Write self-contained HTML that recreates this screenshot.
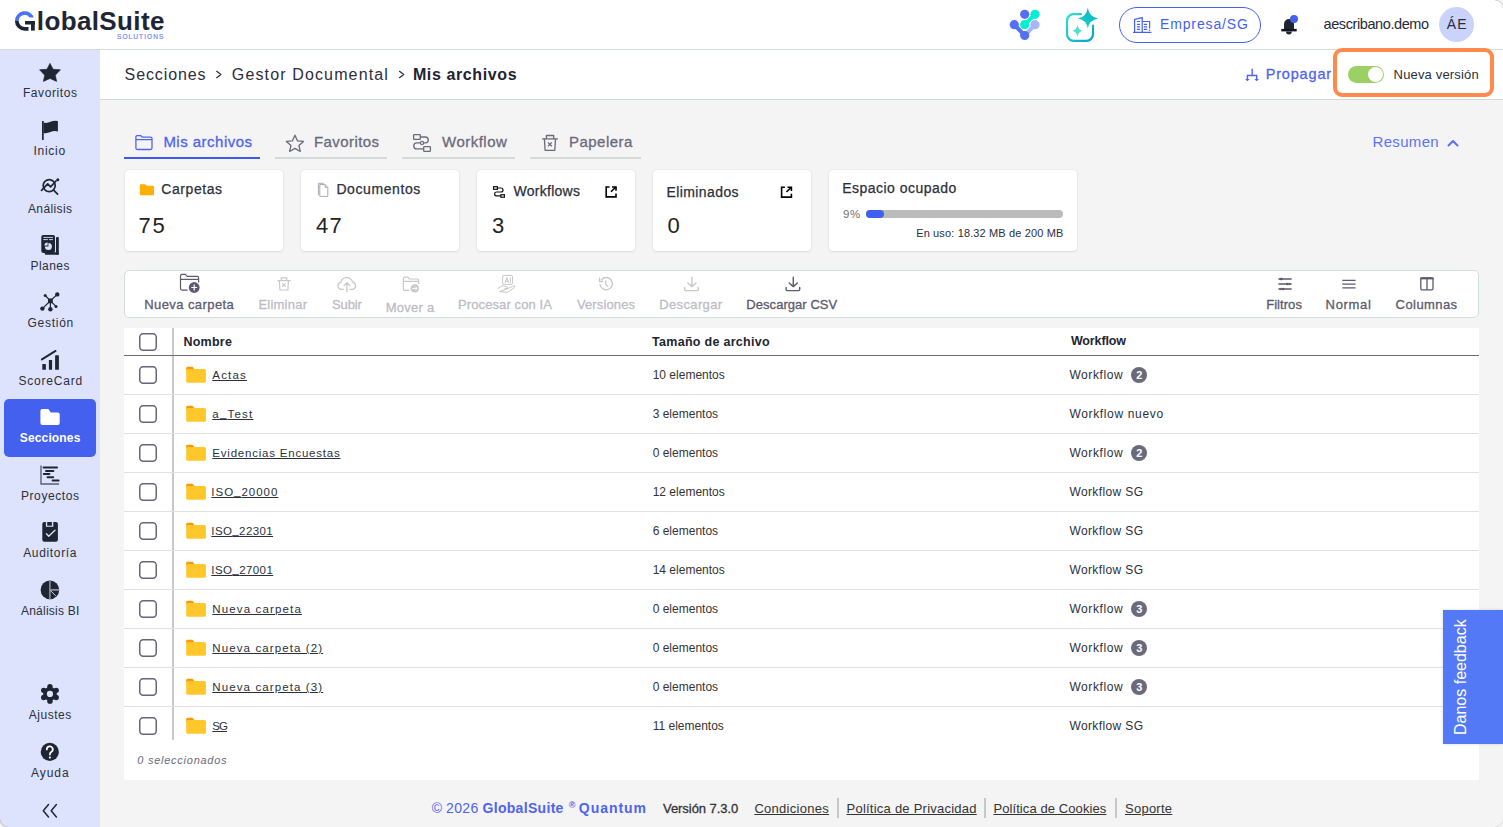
<!DOCTYPE html>
<html><head><meta charset="utf-8">
<style>
html,body{margin:0;padding:0;}
body{width:1503px;height:827px;position:relative;overflow:hidden;background:#f4f4f4;font-family:"Liberation Sans", sans-serif;}
.t{position:absolute;white-space:nowrap;line-height:1;}
.a{position:absolute;}
.g{background:linear-gradient(to bottom,#4a7cf7 0,#4a7cf7 47%,#1e2635 47%);-webkit-background-clip:text;background-clip:text;color:transparent;}
svg{position:absolute;overflow:visible;}
</style></head><body>
<!-- header -->
<div class="a" style="left:0;top:0;width:1503px;height:49px;background:#fff;"></div>
<div class="a" style="left:0;top:49px;width:1503px;height:1px;background:#d5dddb;"></div>
<!-- sidebar -->
<div class="a" style="left:0;top:50px;width:100px;height:777px;background:#dde3fd;"></div>
<div class="a" style="left:4px;top:399px;width:92px;height:58px;background:#4361ee;border-radius:5px;"></div>
<!-- breadcrumb bar -->
<div class="a" style="left:100px;top:50px;width:1403px;height:49px;background:#fff;"></div>
<div class="a" style="left:100px;top:99px;width:1403px;height:1px;background:#d3dbd9;"></div>
<!-- orange box -->
<div class="a" style="left:1333px;top:48px;width:153px;height:41px;border:4px solid #ff8a4c;border-radius:9px;"></div>
<!-- toggle -->
<div class="a" style="left:1348px;top:66px;width:36px;height:17px;background:#9bd164;border-radius:9px;"></div>
<div class="a" style="left:1368px;top:67px;width:15px;height:15px;background:#fff;border-radius:50%;"></div>
<!-- pill -->
<div class="a" style="left:1119px;top:7px;width:140px;height:34px;border:1px solid #4361ee;border-radius:18px;"></div>
<!-- avatar -->
<div class="a" style="left:1439px;top:7px;width:35px;height:35px;background:#c9d3fb;border-radius:50%;"></div>
<!-- tab underlines -->
<div class="a" style="left:124px;top:157px;width:136px;height:2px;background:#3b5bf0;"></div>
<div class="a" style="left:275px;top:157px;width:112px;height:2px;background:#d3dbd9;"></div>
<div class="a" style="left:402px;top:157px;width:113px;height:2px;background:#d3dbd9;"></div>
<div class="a" style="left:530px;top:157px;width:111px;height:2px;background:#d3dbd9;"></div>
<!-- cards -->
<div class="a" style="left:125px;top:170px;width:158px;height:81px;background:#fff;border-radius:4px;box-shadow:0 1px 2px rgba(50,55,90,0.10),0 0 1.5px rgba(50,55,90,0.14);"></div>
<div class="a" style="left:301px;top:170px;width:158px;height:81px;background:#fff;border-radius:4px;box-shadow:0 1px 2px rgba(50,55,90,0.10),0 0 1.5px rgba(50,55,90,0.14);"></div>
<div class="a" style="left:477px;top:170px;width:158px;height:81px;background:#fff;border-radius:4px;box-shadow:0 1px 2px rgba(50,55,90,0.10),0 0 1.5px rgba(50,55,90,0.14);"></div>
<div class="a" style="left:653px;top:170px;width:158px;height:81px;background:#fff;border-radius:4px;box-shadow:0 1px 2px rgba(50,55,90,0.10),0 0 1.5px rgba(50,55,90,0.14);"></div>
<div class="a" style="left:829px;top:170px;width:248px;height:81px;background:#fff;border-radius:4px;box-shadow:0 1px 2px rgba(50,55,90,0.10),0 0 1.5px rgba(50,55,90,0.14);"></div>
<!-- progress -->
<div class="a" style="left:866px;top:210px;width:197px;height:8px;background:#bbbbbb;border-radius:4px;"></div>
<div class="a" style="left:866px;top:210px;width:18px;height:8px;background:#4060ef;border-radius:4px;"></div>
<!-- toolbar -->
<div class="a" style="left:124px;top:270px;width:1353px;height:46px;background:#fff;border:1px solid #d5dedb;border-radius:5px;"></div>
<!-- table -->
<div class="a" style="left:124px;top:328px;width:1355px;height:452px;background:#fff;"></div>
<div class="a" style="left:172px;top:328px;width:2px;height:412px;background:#c9c9c9;"></div>
<div class="a" style="left:124px;top:355px;width:1355px;height:1px;background:#6b6a7b;"></div>
<div class="a" style="left:124px;top:394px;width:1355px;height:1px;background:#e0e0e0;"></div>
<div class="a" style="left:124px;top:433px;width:1355px;height:1px;background:#e0e0e0;"></div>
<div class="a" style="left:124px;top:472px;width:1355px;height:1px;background:#e0e0e0;"></div>
<div class="a" style="left:124px;top:511px;width:1355px;height:1px;background:#e0e0e0;"></div>
<div class="a" style="left:124px;top:550px;width:1355px;height:1px;background:#e0e0e0;"></div>
<div class="a" style="left:124px;top:589px;width:1355px;height:1px;background:#e0e0e0;"></div>
<div class="a" style="left:124px;top:628px;width:1355px;height:1px;background:#e0e0e0;"></div>
<div class="a" style="left:124px;top:667px;width:1355px;height:1px;background:#e0e0e0;"></div>
<div class="a" style="left:124px;top:706px;width:1355px;height:1px;background:#e0e0e0;"></div>
<!-- footer separators -->
<div class="a" style="left:837px;top:798px;width:2px;height:20px;background:#c8c8c8;"></div>
<div class="a" style="left:984px;top:798px;width:2px;height:20px;background:#c8c8c8;"></div>
<div class="a" style="left:1115px;top:798px;width:2px;height:20px;background:#c8c8c8;"></div>
<!-- feedback -->
<div class="a" style="left:1443px;top:610px;width:60px;height:134px;background:#5479f7;box-shadow:0 0 3px rgba(0,0,0,0.15);"></div>
<svg style="left:0;top:0" width="1503" height="827" viewBox="0 0 1503 827"><path d="M14.95 20.9 A9.75 9.75 0 0 1 33.84 17.5 H29.64 A6 6 0 0 0 18.7 20.9 Z" fill="#4a72f5"/>
<path d="M14.95 20.9 A9.75 9.75 0 0 0 24.7 30.65 H28.5 V26.9 H24.7 A6 6 0 0 1 18.7 20.9 Z" fill="#1e2635"/><rect x="25" y="21" width="9.8" height="3.5" fill="#1e2635"/><rect x="31" y="21" width="3.8" height="9.6" fill="#1e2635"/>
<g stroke-linecap="round">
<line x1="1035" y1="24.7" x2="1024.7" y2="35.5" stroke="#a7b5fb" stroke-width="4"/>
<circle cx="1035" cy="24.7" r="4.6" fill="#a7b5fb"/>
<line x1="1014.3" y1="24.7" x2="1024.7" y2="35.5" stroke="#5470f6" stroke-width="4"/>
<circle cx="1014.3" cy="24.7" r="4.6" fill="#5470f6"/><circle cx="1024.7" cy="35.5" r="4.6" fill="#5470f6"/><circle cx="1024.7" cy="14.3" r="4.6" fill="#5470f6"/>
<line x1="1035" y1="14.3" x2="1024.7" y2="24.7" stroke="#00f0d2" stroke-width="4"/>
<circle cx="1035" cy="14.3" r="4.6" fill="#00f0d2"/><circle cx="1024.7" cy="24.7" r="4.6" fill="#00f0d2"/>
</g>
<defs><linearGradient id="gai" x1="0" y1="0" x2="1" y2="1"><stop offset="0" stop-color="#2fe3c8"/><stop offset="1" stop-color="#0b9fd0"/></linearGradient><linearGradient id="gst" x1="0" y1="1" x2="1" y2="0"><stop offset="0" stop-color="#14d8c4"/><stop offset="1" stop-color="#0aaccb"/></linearGradient></defs>
<path d="M1081 14.2 H1073.5 A6.5 6.5 0 0 0 1067 20.7 V34.3 A6.5 6.5 0 0 0 1073.5 40.8 H1086.5 A6.5 6.5 0 0 0 1093 34.3 V25.5" fill="none" stroke="url(#gai)" stroke-width="2.2" stroke-linecap="round"/>
<path d="M1087.8 7.8 Q1089.2 17.2 1098.2 18.6 Q1089.2 20 1087.8 28.5 Q1086.4 20 1077.9 18.6 Q1086.4 17.2 1087.8 7.8Z" fill="url(#gst)"/>
<path d="M1077.4 25 Q1078.2 29.9 1082.6 30.8 Q1078.2 31.7 1077.4 36.8 Q1076.6 31.7 1072.2 30.8 Q1076.6 29.9 1077.4 25Z" fill="#4fe0cf"/>
<g fill="none" stroke="#4361ee" stroke-width="1.2" stroke-linecap="round"><path d="M1133.5 32.3 H1151"/><path d="M1134.6 32 V19.4 L1142.2 17.6 V32"/><path d="M1142.2 21.5 H1149.6 V28"/><path d="M1137.4 21.5 H1139.6 M1137.4 24.3 H1139.6 M1137.4 26.9 H1139.6 M1137.4 29.4 H1139.6 M1144.3 24.3 H1146.7 M1144.3 26.9 H1146.7 M1144.3 29.4 H1146.7"/></g><circle cx="1149.6" cy="30.3" r="0.7" fill="#4361ee"/>
<path d="M1284 29 V24 A5 5 0 0 1 1294 24 V29 Z" fill="#1f2633"/><rect x="1281.3" y="28.9" width="15.4" height="2.5" fill="#0f1521"/><path d="M1286 31.6 A2.9 2.9 0 0 0 1291.8 31.6 Z" fill="#1f2633"/><circle cx="1294" cy="18.9" r="4" fill="#4361ee"/>
<g fill="none" stroke="#4f63f0" stroke-width="1.4"><path d="M1252.2 68.8 V75.5 M1247.4 79 V75.5 H1256.7 V79"/></g><path d="M1245.1 79 H1249.7 L1247.4 81.2Z M1254.4 79 H1259 L1256.7 81.2Z" fill="#4f63f0"/>
<g fill="none" stroke="#2d2d3a" stroke-width="1.25" stroke-linecap="round" stroke-linejoin="round"><path d="M216.7 71.3 L220.9 74.5 L216.7 77.7"/><path d="M399.5 71.3 L403.7 74.5 L399.5 77.7"/></g>
<g fill="none" stroke="#4f63f0" stroke-width="1.3" stroke-linejoin="round"><path d="M136.8 135.6 H140.5 L142.2 137.1 H150.5 A1.5 1.5 0 0 1 152 138.6 V148 A1.5 1.5 0 0 1 150.5 149.5 H137.4 A1.5 1.5 0 0 1 135.9 148 V136.8 A1.2 1.2 0 0 1 136.8 135.6Z M135.9 139.6 H152"/></g>
<path d="M294.95,135.20 L297.42,140.80 L303.51,141.42 L298.94,145.50 L300.24,151.48 L294.95,148.40 L289.66,151.48 L290.96,145.50 L286.39,141.42 L292.48,140.80Z" fill="none" stroke="#6b6a7b" stroke-width="1.3" stroke-linejoin="round"/>
<g fill="none" stroke="#6b6a7b" stroke-width="1.3"><rect x="413.6" y="134.6" width="6.7" height="4.8" rx="0.6"/><rect x="423.7" y="146.6" width="6.7" height="4.8" rx="0.6"/><path d="M420.3 137 H425.3 A2.95 2.95 0 0 1 425.3 142.9 H416.8 A3 3 0 0 0 416.8 148.9 H423.7"/></g><circle cx="422" cy="142.9" r="1.6" fill="#f4f4f4" stroke="#6b6a7b" stroke-width="1.2"/>
<g fill="none" stroke="#6b6a7b" stroke-width="1.3" stroke-linejoin="round"><path d="M542.1 138.9 H557.9"/><path d="M546.4 138.9 V135.5 H553.7 V138.9"/><path d="M544.4 138.9 L545.1 150.3 H554.8 L555.5 138.9"/><path d="M548 142.4 L551.8 146.2 M551.8 142.4 L548 146.2"/></g>
<path d="M1448.5 145.5 L1453 141 L1457.5 145.5" fill="none" stroke="#5a73f5" stroke-width="2" stroke-linecap="round" stroke-linejoin="round"/>
<path d="M139.8 185.4 A1.2 1.2 0 0 1 141 184.2 H145.2 L146.8 185.8 H152.8 A1.2 1.2 0 0 1 154 187 V194.1 A1.2 1.2 0 0 1 152.8 195.3 H141 A1.2 1.2 0 0 1 139.8 194.1Z" fill="#ffb000"/>
<g fill="none" stroke="#a9a9b4" stroke-width="1" stroke-linejoin="round"><path d="M319.8 184.6 H325.2 L327.8 187.4 V196.4 H319.8Z"/><path d="M318.4 195.2 V183.3 H323.8"/><path d="M325.2 184.8 V187.4 H327.6"/></g>
<g fill="none" stroke="#111" stroke-width="1.2"><rect x="493.6" y="186.7" width="3.8" height="2.6"/><rect x="500.9" y="194.7" width="3.5" height="2.5"/><path d="M497.4 188 H501 A2 2 0 0 1 501 192 H496.6 A1.9 1.9 0 0 0 496.6 195.9 H500.9"/></g>
<g fill="none" stroke="#000" stroke-width="1.6" stroke-linejoin="miter"><path d="M609.5 187.0 H606.2 V196.9 H616.0 V193.5"/><path d="M611.0 191.8 L615.8 187.0"/><path d="M612.0 187.0 H616.0 V190.8"/></g>
<g fill="none" stroke="#000" stroke-width="1.6" stroke-linejoin="miter"><path d="M784.9 187.2 H781.6 V197.1 H791.4 V193.7"/><path d="M786.4 192.0 L791.2 187.2"/><path d="M787.4 187.2 H791.4 V191.0"/></g>
<g fill="none" stroke="#5c5a6e" stroke-width="1.2" stroke-linejoin="round"><path d="M187.6 290.1 H182 A1.5 1.5 0 0 1 180.5 288.6 V275.8 A1.4 1.4 0 0 1 181.9 274.4 H185.4 L187.3 276.4 H197.2 A1.4 1.4 0 0 1 198.6 277.8 V282.6"/><path d="M180.5 279.4 H198.6"/></g><circle cx="194.2" cy="287.5" r="5.4" fill="#5c5a6e"/><path d="M194.2 284.6 V290.4 M191.3 287.5 H197.1" stroke="#fff" stroke-width="1.2"/>
<g fill="none" stroke="#c8c8cc" stroke-width="1.2" stroke-linejoin="round"><path d="M277.4 280.6 H290.6"/><path d="M281.3 280.6 V277.9 H286.8 V280.6"/><path d="M279.4 280.6 L279.9 290 H287.9 L288.4 280.6"/><path d="M282.2 283.4 L285.6 286.8 M285.6 283.4 L282.2 286.8"/></g>
<g fill="none" stroke="#c8c8cc" stroke-width="1.3" stroke-linecap="round" stroke-linejoin="round"><path d="M343.7 289.4 H341.3 A3.6 3.6 0 0 1 340.8 282.3 A6 6 0 0 1 352.4 281.8 A3.9 3.9 0 0 1 352.6 289.4 H350.1"/><path d="M346.9 291.5 V282.8 M344 285.6 L346.9 282.6 L349.8 285.6"/></g>
<g fill="none" stroke="#c8c8cc" stroke-width="1.2" stroke-linejoin="round"><path d="M409.5 290.4 H404.8 A1.4 1.4 0 0 1 403.4 289 V278.6 A1.4 1.4 0 0 1 404.8 277.2 H407.9 L409.2 279 H417.2 A1.4 1.4 0 0 1 418.6 280.4 V284"/><path d="M403.4 281.4 H418.6"/></g><circle cx="414.8" cy="288.4" r="4.2" fill="#c8c8cc"/><path d="M412.3 288.4 H417 M415.3 286.6 L417.1 288.4 L415.3 290.2" fill="none" stroke="#fff" stroke-width="1"/>
<g fill="none" stroke="#c8c8cc" stroke-width="1" stroke-linejoin="round"><rect x="502.6" y="275.4" width="9.9" height="9" rx="1.5"/><path d="M505 282.8 L506.8 277.6 L508.6 282.8 M505.6 281.2 H508 M510.4 277.6 V282.8"/><path d="M497.6 288.8 L501 286.4 Q502.6 285.4 504.5 286.2 L507.6 287.3 Q508.6 287.8 507.8 288.6 L504.5 288.6 M507.8 288.6 L513.5 285.8 Q515.2 285.4 514.8 286.9 L509 291.6 Q507.8 292.4 506.2 292.3 L499.5 291.6 Z"/></g>
<g fill="none" stroke="#c8c8cc" stroke-width="1.3" stroke-linecap="round" stroke-linejoin="round"><path d="M600 284.5 A6.2 6.2 0 1 0 601.5 279.6"/><path d="M599.6 278.2 V281.5 H602.9"/><path d="M605.8 281 V284.6 L607.8 286.2"/></g>
<g fill="none" stroke="#c8c8cc" stroke-width="1.4" stroke-linecap="round" stroke-linejoin="round"><path d="M691.9 277.2 V286.2 M687.8 283 L691.9 286.6 L696.0 283"/><path d="M684.7 287.4 V289.6 A1 1 0 0 0 685.7 290.6 H697.3 A1 1 0 0 0 698.3 289.6 V287.4"/></g>
<g fill="none" stroke="#5c5a6e" stroke-width="1.4" stroke-linecap="round" stroke-linejoin="round"><path d="M793.3 277.2 V286.2 M789.2 283 L793.3 286.6 L797.4 283"/><path d="M786.1 287.4 V289.6 A1 1 0 0 0 787.1 290.6 H798.7 A1 1 0 0 0 799.7 289.6 V287.4"/></g>
<g fill="none" stroke="#5c5a6e" stroke-width="1.3"><path d="M1278.4 279 H1291.6 M1278.4 284 H1291.6 M1278.4 289 H1291.6"/></g><g fill="#5c5a6e"><path d="M1279 279 L1281.3 277.4 V280.6Z"/><path d="M1291 284 L1288.7 282.4 V285.6Z"/><path d="M1279 289 L1281.3 287.4 V290.6Z"/><circle cx="1283.2" cy="289" r="1.2"/><circle cx="1287.2" cy="284" r="1.2"/><circle cx="1281.6" cy="279" r="1.2"/></g>
<path d="M1342.3 280.4 H1355.6 M1342.3 284.1 H1355.6 M1342.3 287.8 H1355.6" stroke="#5c5a6e" stroke-width="1.2"/>
<g fill="none" stroke="#5c5a6e" stroke-width="1.3"><rect x="1420.8" y="278" width="12.2" height="11.8" rx="1.3"/><path d="M1427 278 V289.8"/></g><rect x="1420.2" y="277.4" width="13.4" height="2" fill="#5c5a6e"/>
<path d="M186.2 370.5 V368.1 Q186.2 366.7 187.6 366.7 H192.5 L195.1 369.7 V370.5 Z" fill="#ff9800"/>
<rect x="186.2" y="368.9" width="19.7" height="13.9" rx="1.6" fill="#ffc729"/>
<circle cx="1139" cy="375" r="8" fill="#6b6a7b"/>
<path d="M186.2 409.5 V407.1 Q186.2 405.7 187.6 405.7 H192.5 L195.1 408.7 V409.5 Z" fill="#ff9800"/>
<rect x="186.2" y="407.9" width="19.7" height="13.9" rx="1.6" fill="#ffc729"/>
<path d="M186.2 448.5 V446.1 Q186.2 444.7 187.6 444.7 H192.5 L195.1 447.7 V448.5 Z" fill="#ff9800"/>
<rect x="186.2" y="446.9" width="19.7" height="13.9" rx="1.6" fill="#ffc729"/>
<circle cx="1139" cy="453" r="8" fill="#6b6a7b"/>
<path d="M186.2 487.5 V485.1 Q186.2 483.7 187.6 483.7 H192.5 L195.1 486.7 V487.5 Z" fill="#ff9800"/>
<rect x="186.2" y="485.9" width="19.7" height="13.9" rx="1.6" fill="#ffc729"/>
<path d="M186.2 526.5 V524.1 Q186.2 522.7 187.6 522.7 H192.5 L195.1 525.7 V526.5 Z" fill="#ff9800"/>
<rect x="186.2" y="524.9" width="19.7" height="13.9" rx="1.6" fill="#ffc729"/>
<path d="M186.2 565.5 V563.1 Q186.2 561.7 187.6 561.7 H192.5 L195.1 564.7 V565.5 Z" fill="#ff9800"/>
<rect x="186.2" y="563.9" width="19.7" height="13.9" rx="1.6" fill="#ffc729"/>
<path d="M186.2 604.5 V602.1 Q186.2 600.7 187.6 600.7 H192.5 L195.1 603.7 V604.5 Z" fill="#ff9800"/>
<rect x="186.2" y="602.9" width="19.7" height="13.9" rx="1.6" fill="#ffc729"/>
<circle cx="1139" cy="609" r="8" fill="#6b6a7b"/>
<path d="M186.2 643.5 V641.1 Q186.2 639.7 187.6 639.7 H192.5 L195.1 642.7 V643.5 Z" fill="#ff9800"/>
<rect x="186.2" y="641.9" width="19.7" height="13.9" rx="1.6" fill="#ffc729"/>
<circle cx="1139" cy="648" r="8" fill="#6b6a7b"/>
<path d="M186.2 682.5 V680.1 Q186.2 678.7 187.6 678.7 H192.5 L195.1 681.7 V682.5 Z" fill="#ff9800"/>
<rect x="186.2" y="680.9" width="19.7" height="13.9" rx="1.6" fill="#ffc729"/>
<circle cx="1139" cy="687" r="8" fill="#6b6a7b"/>
<path d="M186.2 721.5 V719.1 Q186.2 717.7 187.6 717.7 H192.5 L195.1 720.7 V721.5 Z" fill="#ff9800"/>
<rect x="186.2" y="719.9" width="19.7" height="13.9" rx="1.6" fill="#ffc729"/>
<rect x="139.75" y="333.75" width="16.5" height="16.5" rx="3.5" fill="none" stroke="#66657a" stroke-width="1.5"/>
<rect x="139.75" y="366.75" width="16.5" height="16.5" rx="3.5" fill="none" stroke="#66657a" stroke-width="1.5"/>
<rect x="139.75" y="405.75" width="16.5" height="16.5" rx="3.5" fill="none" stroke="#66657a" stroke-width="1.5"/>
<rect x="139.75" y="444.75" width="16.5" height="16.5" rx="3.5" fill="none" stroke="#66657a" stroke-width="1.5"/>
<rect x="139.75" y="483.75" width="16.5" height="16.5" rx="3.5" fill="none" stroke="#66657a" stroke-width="1.5"/>
<rect x="139.75" y="522.75" width="16.5" height="16.5" rx="3.5" fill="none" stroke="#66657a" stroke-width="1.5"/>
<rect x="139.75" y="561.75" width="16.5" height="16.5" rx="3.5" fill="none" stroke="#66657a" stroke-width="1.5"/>
<rect x="139.75" y="600.75" width="16.5" height="16.5" rx="3.5" fill="none" stroke="#66657a" stroke-width="1.5"/>
<rect x="139.75" y="639.75" width="16.5" height="16.5" rx="3.5" fill="none" stroke="#66657a" stroke-width="1.5"/>
<rect x="139.75" y="678.75" width="16.5" height="16.5" rx="3.5" fill="none" stroke="#66657a" stroke-width="1.5"/>
<rect x="139.75" y="717.75" width="16.5" height="16.5" rx="3.5" fill="none" stroke="#66657a" stroke-width="1.5"/>
<path d="M50 63.4 L53.1 69.3 L60.4 69.8 L55.3 75.2 L56.6 81.4 L50 78.4 L43.4 81.4 L44.7 75.2 L39.6 69.8 L46.9 69.3Z" fill="#1f2633" stroke="#1f2633" stroke-width="0.7" stroke-linejoin="round"/>
<rect x="42" y="121" width="1.7" height="19" fill="#1f2633"/><path d="M43.5 122.6 Q47 123.6 50.5 121.8 Q54.3 120 57.9 121.1 V131.6 Q54.3 130.4 50.5 132.1 Q47 133.6 43.5 133 Z" fill="#1f2633"/>
<g fill="none" stroke="#1f2633" stroke-width="1.7" stroke-linecap="round" stroke-linejoin="round"><circle cx="49.2" cy="185.6" r="6"/><path d="M53.6 190.2 L57.6 194.2"/><path d="M41.5 190.4 L47.7 183.9 L50.6 186.9 L56 181"/></g><circle cx="57.8" cy="179.7" r="1.5" fill="#1f2633"/>
<rect x="56" y="237" width="2.8" height="17.8" rx="0.8" fill="#1f2633"/><rect x="44.8" y="252.2" width="14" height="2.6" rx="0.8" fill="#1f2633"/><rect x="41.3" y="235.1" width="13.7" height="17.8" rx="1.8" fill="#1f2633"/><path d="M43.3 237.4 H53 M43.3 239.6 H47.8 M49 239.6 H53" stroke="#dde3fd" stroke-width="0.9"/><path d="M48.4 246.4 V242.9 A3.5 3.5 0 1 1 44.9 246.4 Z" fill="#dde3fd"/><path d="M47.6 245.6 H44.4 A3.2 3.2 0 0 1 47.6 242.4Z" fill="#dde3fd"/>
<g stroke="#1f2633" stroke-width="1.2"><path d="M50.4 300.8 L45.2 295.5 M50.4 300.8 L57.3 294.4 M50.4 300.8 L42.4 308.6 M50.4 300.8 V309.3 M50.4 300.8 L56 306.4"/></g><g fill="#1f2633"><rect x="48" y="298.4" width="4.8" height="4.8" rx="0.6"/><circle cx="45.2" cy="295.5" r="1.5"/><circle cx="57.3" cy="294.4" r="2.2"/><circle cx="42.4" cy="308.6" r="2.2"/><circle cx="50.4" cy="309.3" r="2.2"/><circle cx="56" cy="306.4" r="1.5"/></g>
<g fill="#1f2633"><rect x="42.3" y="364" width="3.6" height="5.8" rx="0.5"/><rect x="48.9" y="360" width="3.2" height="9.8" rx="0.5"/><rect x="55.1" y="355.2" width="3.8" height="14.6" rx="0.5"/></g><path d="M41.9 359.4 L55.6 350.9" stroke="#1f2633" stroke-width="1.9" stroke-linecap="round"/>
<path d="M40.4 410.8 A1.9 1.9 0 0 1 42.3 408.9 H48.3 L50.8 412.4 H57.8 A1.9 1.9 0 0 1 59.7 414.3 V423 A1.9 1.9 0 0 1 57.8 424.9 H42.3 A1.9 1.9 0 0 1 40.4 423Z" fill="#fff"/>
<path d="M41 465.6 V484 H59" fill="none" stroke="#5a6070" stroke-width="1.4"/><g stroke="#1f2633" stroke-width="2" stroke-linecap="round"><path d="M43.6 467.4 H57 M46 470.9 H53.4 M43.8 474 H49.4 M47.6 477.2 H53.2 M52.6 480.5 H58.6"/></g>
<path d="M42.3 524 A2 2 0 0 1 44.3 522 H45.9 V526.8 H53.3 V522 H55.9 A2 2 0 0 1 57.9 524 V539.7 A2 2 0 0 1 55.9 541.7 H44.3 A2 2 0 0 1 42.3 539.7Z" fill="#1f2633"/><rect x="47.2" y="522" width="4.7" height="3.7" fill="#1f2633"/><path d="M46.4 533.8 L48.7 536.3 L55 530.2" fill="none" stroke="#dde3fd" stroke-width="1.3" stroke-linecap="round" stroke-linejoin="round"/>
<circle cx="49.9" cy="589.9" r="9.3" fill="#1f2633"/><path d="M49.9 580.6 V599.2 M49.9 589.9 H59.2" stroke="#8a90a0" stroke-width="1.6"/><path d="M50.4 590.4 L55.8 595.9" stroke="#c9cfe6" stroke-width="1"/>
<g fill="#1f2633"><circle cx="49.95" cy="686.75" r="2.7"/><circle cx="56.19" cy="690.35" r="2.7"/><circle cx="56.19" cy="697.55" r="2.7"/><circle cx="49.95" cy="701.15" r="2.7"/><circle cx="43.71" cy="697.55" r="2.7"/><circle cx="43.71" cy="690.35" r="2.7"/><circle cx="49.95" cy="693.95" r="6.9"/></g><circle cx="49.95" cy="693.95" r="3.1" fill="#dde3fd"/>
<circle cx="49.8" cy="751.9" r="9.1" fill="#1f2633"/><path d="M46.8 749.4 A3 3 0 1 1 51.2 752 Q49.9 752.8 49.9 754.6" fill="none" stroke="#fff" stroke-width="1.7" stroke-linecap="round"/><circle cx="49.9" cy="757.5" r="1.1" fill="#fff"/>
<path d="M48.5 804.5 L43.3 810.7 L48.5 816.9 M56.4 804.5 L51.2 810.7 L56.4 816.9" fill="none" stroke="#1f2633" stroke-width="1.5" stroke-linecap="round" stroke-linejoin="round"/>
<path d="M1503 0 H1495 A8 8 0 0 1 1503 8 Z" fill="#f4f4f4"/><path d="M1495 0 A8 8 0 0 1 1503 8" fill="none" stroke="#d0d0d0" stroke-width="1"/>
<path d="M0 827 V819 A8 8 0 0 0 8 827 Z" fill="#f4f4f4"/><path d="M0 819 A8 8 0 0 0 8 827" fill="none" stroke="#cccccc" stroke-width="1.2"/>
<path d="M1503 827 V819 A8 8 0 0 1 1495 827 Z" fill="#f4f4f4"/><path d="M1503 819 A8 8 0 0 1 1495 827" fill="none" stroke="#dddddd" stroke-width="1"/></svg>
<div class="t" style="left:36.80px;top:6px;line-height:30px;font-size:26px;color:#1e2635;font-weight:700;letter-spacing:0.380px;">lobalSuite</div>
<div class="t" style="left:117.00px;top:33px;line-height:7px;font-size:6.6px;color:#6f8ef6;letter-spacing:1.037px;-webkit-text-stroke:0.2px currentColor;">SOLUTIONS</div>
<div class="t" style="left:1160.00px;top:16px;line-height:16px;font-size:14px;color:#4361ee;letter-spacing:0.861px;">Empresa/SG</div>
<div class="t" style="left:1323.50px;top:16px;line-height:16px;font-size:14.5px;color:#1f2937;letter-spacing:-0.405px;">aescribano.demo</div>
<div class="t" style="left:1446.80px;top:16px;line-height:16px;font-size:14px;color:#2b2b3b;letter-spacing:1.062px;">ÁE</div>
<div class="t" style="left:124.60px;top:66px;line-height:17px;font-size:16px;color:#2d2d3a;letter-spacing:0.885px;">Secciones</div>
<div class="t" style="left:231.80px;top:66px;line-height:17px;font-size:16px;color:#2d2d3a;letter-spacing:1.139px;">Gestor Documental</div>
<div class="t" style="left:412.90px;top:66px;line-height:17px;font-size:16px;color:#23232f;font-weight:700;letter-spacing:0.615px;">Mis archivos</div>
<div class="t" style="left:1265.70px;top:66px;line-height:16px;font-size:14.5px;color:#4f63f0;letter-spacing:0.826px;-webkit-text-stroke:0.3px currentColor;">Propagar</div>
<div class="t" style="left:1393.60px;top:67px;line-height:15px;font-size:13px;color:#2b2f3a;letter-spacing:0.161px;">Nueva versión</div>
<div class="t" style="left:163.40px;top:133px;line-height:17px;font-size:15px;color:#4f63f0;letter-spacing:0.477px;-webkit-text-stroke:0.3px currentColor;">Mis archivos</div>
<div class="t" style="left:314.00px;top:133px;line-height:17px;font-size:15px;color:#6b6a7b;letter-spacing:0.427px;-webkit-text-stroke:0.3px currentColor;">Favoritos</div>
<div class="t" style="left:442.00px;top:133px;line-height:17px;font-size:15px;color:#6b6a7b;letter-spacing:0.491px;-webkit-text-stroke:0.3px currentColor;">Workflow</div>
<div class="t" style="left:569.00px;top:133px;line-height:17px;font-size:15px;color:#6b6a7b;letter-spacing:0.471px;-webkit-text-stroke:0.3px currentColor;">Papelera</div>
<div class="t" style="left:1372.50px;top:133px;line-height:17px;font-size:15px;color:#5a73f5;letter-spacing:0.324px;">Resumen</div>
<div class="t" style="left:161.30px;top:181px;line-height:16px;font-size:14px;color:#2b2f3a;letter-spacing:0.570px;-webkit-text-stroke:0.25px currentColor;">Carpetas</div>
<div class="t" style="left:138.50px;top:213px;line-height:25px;font-size:22px;color:#222222;letter-spacing:1.765px;">75</div>
<div class="t" style="left:336.40px;top:181px;line-height:16px;font-size:14px;color:#2b2f3a;letter-spacing:0.590px;-webkit-text-stroke:0.25px currentColor;">Documentos</div>
<div class="t" style="left:315.90px;top:213px;line-height:25px;font-size:22px;color:#222222;letter-spacing:1.265px;">47</div>
<div class="t" style="left:513.60px;top:183px;line-height:16px;font-size:14px;color:#2b2f3a;letter-spacing:0.262px;-webkit-text-stroke:0.25px currentColor;">Workflows</div>
<div class="t" style="left:492.00px;top:213px;line-height:25px;font-size:22px;color:#222222;">3</div>
<div class="t" style="left:666.50px;top:184px;line-height:16px;font-size:14px;color:#2b2f3a;letter-spacing:0.403px;-webkit-text-stroke:0.25px currentColor;">Eliminados</div>
<div class="t" style="left:667.50px;top:213px;line-height:25px;font-size:22px;color:#222222;">0</div>
<div class="t" style="left:842.20px;top:180px;line-height:16px;font-size:14px;color:#2b2f3a;letter-spacing:0.477px;-webkit-text-stroke:0.25px currentColor;">Espacio ocupado</div>
<div class="t" style="left:843.00px;top:208px;line-height:12px;font-size:11.5px;color:#707070;letter-spacing:0.604px;">9%</div>
<div class="t" style="left:916.20px;top:227px;line-height:12px;font-size:11px;color:#2b2f3a;letter-spacing:0.138px;">En uso: 18.32 MB de 200 MB</div>
<div class="t" style="left:144.20px;top:297px;line-height:15px;font-size:13px;color:#5c5a6e;letter-spacing:0.423px;-webkit-text-stroke:0.3px currentColor;">Nueva carpeta</div>
<div class="t" style="left:258.40px;top:297px;line-height:15px;font-size:13px;color:#bdbcc6;letter-spacing:0.239px;-webkit-text-stroke:0.3px currentColor;">Eliminar</div>
<div class="t" style="left:331.90px;top:297px;line-height:15px;font-size:13px;color:#bdbcc6;letter-spacing:-0.080px;-webkit-text-stroke:0.3px currentColor;">Subir</div>
<div class="t" style="left:385.70px;top:300px;line-height:15px;font-size:13px;color:#bdbcc6;letter-spacing:0.262px;-webkit-text-stroke:0.3px currentColor;">Mover a</div>
<div class="t" style="left:458.00px;top:297px;line-height:15px;font-size:13px;color:#bdbcc6;letter-spacing:0.106px;-webkit-text-stroke:0.3px currentColor;">Procesar con IA</div>
<div class="t" style="left:576.90px;top:297px;line-height:15px;font-size:13px;color:#bdbcc6;letter-spacing:0.139px;-webkit-text-stroke:0.3px currentColor;">Versiones</div>
<div class="t" style="left:659.20px;top:297px;line-height:15px;font-size:13px;color:#bdbcc6;letter-spacing:0.370px;-webkit-text-stroke:0.3px currentColor;">Descargar</div>
<div class="t" style="left:746.30px;top:297px;line-height:15px;font-size:13px;color:#5c5a6e;letter-spacing:0.055px;-webkit-text-stroke:0.3px currentColor;">Descargar CSV</div>
<div class="t" style="left:1266.20px;top:297px;line-height:15px;font-size:13px;color:#5c5a6e;letter-spacing:0.052px;-webkit-text-stroke:0.3px currentColor;">Filtros</div>
<div class="t" style="left:1325.60px;top:297px;line-height:15px;font-size:13px;color:#5c5a6e;letter-spacing:0.659px;-webkit-text-stroke:0.3px currentColor;">Normal</div>
<div class="t" style="left:1395.60px;top:297px;line-height:15px;font-size:13px;color:#5c5a6e;letter-spacing:0.425px;-webkit-text-stroke:0.3px currentColor;">Columnas</div>
<div class="t" style="left:183.40px;top:335px;line-height:14px;font-size:12.5px;color:#1f2430;font-weight:700;letter-spacing:0.265px;">Nombre</div>
<div class="t" style="left:652.00px;top:335px;line-height:14px;font-size:12.5px;color:#1f2430;font-weight:700;letter-spacing:0.290px;">Tamaño de archivo</div>
<div class="t" style="left:1070.90px;top:334px;line-height:14px;font-size:12.5px;color:#1f2430;font-weight:700;letter-spacing:-0.128px;">Workflow</div>
<div class="t" style="left:212.30px;top:369px;line-height:12px;font-size:11.5px;color:#2b2f3a;letter-spacing:1.197px;text-decoration:underline;text-underline-offset:1px;text-decoration-thickness:1px;">Actas</div>
<div class="t" style="left:652.70px;top:368px;line-height:14px;font-size:12px;color:#333333;">10 elementos</div>
<div class="t" style="left:1069.40px;top:368px;line-height:14px;font-size:12px;color:#2b2f3a;letter-spacing:0.578px;">Workflow</div>
<div class="t" style="left:212.30px;top:408px;line-height:12px;font-size:11.5px;color:#2b2f3a;letter-spacing:1.203px;text-decoration:underline;text-underline-offset:1px;text-decoration-thickness:1px;">a<span style="position:relative;top:-1.5px">_</span>Test</div>
<div class="t" style="left:652.70px;top:407px;line-height:14px;font-size:12px;color:#333333;">3 elementos</div>
<div class="t" style="left:1069.40px;top:407px;line-height:14px;font-size:12px;color:#2b2f3a;letter-spacing:0.656px;">Workflow nuevo</div>
<div class="t" style="left:212.30px;top:447px;line-height:12px;font-size:11.5px;color:#2b2f3a;letter-spacing:0.786px;text-decoration:underline;text-underline-offset:1px;text-decoration-thickness:1px;">Evidencias Encuestas</div>
<div class="t" style="left:652.70px;top:446px;line-height:14px;font-size:12px;color:#333333;">0 elementos</div>
<div class="t" style="left:1069.40px;top:446px;line-height:14px;font-size:12px;color:#2b2f3a;letter-spacing:0.578px;">Workflow</div>
<div class="t" style="left:211.30px;top:486px;line-height:12px;font-size:11.5px;color:#2b2f3a;letter-spacing:0.989px;text-decoration:underline;text-underline-offset:1px;text-decoration-thickness:1px;">ISO<span style="position:relative;top:-1.5px">_</span>20000</div>
<div class="t" style="left:652.70px;top:485px;line-height:14px;font-size:12px;color:#333333;">12 elementos</div>
<div class="t" style="left:1069.40px;top:485px;line-height:14px;font-size:12px;color:#2b2f3a;letter-spacing:0.384px;">Workflow SG</div>
<div class="t" style="left:211.30px;top:525px;line-height:12px;font-size:11.5px;color:#2b2f3a;letter-spacing:0.401px;text-decoration:underline;text-underline-offset:1px;text-decoration-thickness:1px;">ISO<span style="position:relative;top:-1.5px">_</span>22301</div>
<div class="t" style="left:652.70px;top:524px;line-height:14px;font-size:12px;color:#333333;">6 elementos</div>
<div class="t" style="left:1069.40px;top:524px;line-height:14px;font-size:12px;color:#2b2f3a;letter-spacing:0.384px;">Workflow SG</div>
<div class="t" style="left:211.30px;top:564px;line-height:12px;font-size:11.5px;color:#2b2f3a;letter-spacing:0.414px;text-decoration:underline;text-underline-offset:1px;text-decoration-thickness:1px;">ISO<span style="position:relative;top:-1.5px">_</span>27001</div>
<div class="t" style="left:652.70px;top:563px;line-height:14px;font-size:12px;color:#333333;">14 elementos</div>
<div class="t" style="left:1069.40px;top:563px;line-height:14px;font-size:12px;color:#2b2f3a;letter-spacing:0.384px;">Workflow SG</div>
<div class="t" style="left:212.30px;top:603px;line-height:12px;font-size:11.5px;color:#2b2f3a;letter-spacing:1.142px;text-decoration:underline;text-underline-offset:1px;text-decoration-thickness:1px;">Nueva carpeta</div>
<div class="t" style="left:652.70px;top:602px;line-height:14px;font-size:12px;color:#333333;">0 elementos</div>
<div class="t" style="left:1069.40px;top:602px;line-height:14px;font-size:12px;color:#2b2f3a;letter-spacing:0.578px;">Workflow</div>
<div class="t" style="left:212.30px;top:642px;line-height:12px;font-size:11.5px;color:#2b2f3a;letter-spacing:1.112px;text-decoration:underline;text-underline-offset:1px;text-decoration-thickness:1px;">Nueva carpeta (2)</div>
<div class="t" style="left:652.70px;top:641px;line-height:14px;font-size:12px;color:#333333;">0 elementos</div>
<div class="t" style="left:1069.40px;top:641px;line-height:14px;font-size:12px;color:#2b2f3a;letter-spacing:0.578px;">Workflow</div>
<div class="t" style="left:212.30px;top:681px;line-height:12px;font-size:11.5px;color:#2b2f3a;letter-spacing:1.112px;text-decoration:underline;text-underline-offset:1px;text-decoration-thickness:1px;">Nueva carpeta (3)</div>
<div class="t" style="left:652.70px;top:680px;line-height:14px;font-size:12px;color:#333333;">0 elementos</div>
<div class="t" style="left:1069.40px;top:680px;line-height:14px;font-size:12px;color:#2b2f3a;letter-spacing:0.578px;">Workflow</div>
<div class="t" style="left:212.30px;top:720px;line-height:12px;font-size:11.5px;color:#2b2f3a;letter-spacing:-0.970px;text-decoration:underline;text-underline-offset:1px;text-decoration-thickness:1px;">SG</div>
<div class="t" style="left:652.70px;top:719px;line-height:14px;font-size:12px;color:#333333;">11 elementos</div>
<div class="t" style="left:1069.40px;top:719px;line-height:14px;font-size:12px;color:#2b2f3a;letter-spacing:0.384px;">Workflow SG</div>
<div class="t" style="left:1136.20px;top:369px;line-height:12px;font-size:11px;color:#ffffff;font-weight:700;">2</div>
<div class="t" style="left:1136.20px;top:447px;line-height:12px;font-size:11px;color:#ffffff;font-weight:700;">2</div>
<div class="t" style="left:1136.20px;top:603px;line-height:12px;font-size:11px;color:#ffffff;font-weight:700;">3</div>
<div class="t" style="left:1136.20px;top:642px;line-height:12px;font-size:11px;color:#ffffff;font-weight:700;">3</div>
<div class="t" style="left:1136.20px;top:681px;line-height:12px;font-size:11px;color:#ffffff;font-weight:700;">3</div>
<div class="t" style="left:137.30px;top:754px;line-height:12px;font-size:11px;color:#6b6a7b;letter-spacing:0.744px;font-style:italic;">0 seleccionados</div>
<div class="t" style="left:431.70px;top:800px;line-height:16px;font-size:14px;color:#4f63f0;">©</div>
<div class="t" style="left:446.00px;top:800px;line-height:16px;font-size:14px;color:#4f63f0;letter-spacing:0.381px;">2026</div>
<div class="t" style="left:482.50px;top:800px;line-height:16px;font-size:14px;color:#4f63f0;font-weight:700;letter-spacing:0.310px;">GlobalSuite</div>
<div class="t" style="left:568.70px;top:800px;line-height:10px;font-size:9px;color:#4f63f0;font-weight:700;">®</div>
<div class="t" style="left:578.80px;top:800px;line-height:16px;font-size:14px;color:#4f63f0;font-weight:700;letter-spacing:0.968px;">Quantum</div>
<div class="t" style="left:663.00px;top:801px;line-height:15px;font-size:13px;color:#333333;letter-spacing:-0.055px;-webkit-text-stroke:0.3px currentColor;">Versión 7.3.0</div>
<div class="t" style="left:754.40px;top:801px;line-height:15px;font-size:13px;color:#333333;letter-spacing:0.286px;text-decoration:underline;text-underline-offset:1px;text-decoration-thickness:1px;">Condiciones</div>
<div class="t" style="left:846.50px;top:801px;line-height:15px;font-size:13px;color:#333333;letter-spacing:0.239px;text-decoration:underline;text-underline-offset:1px;text-decoration-thickness:1px;">Política de Privacidad</div>
<div class="t" style="left:993.40px;top:801px;line-height:15px;font-size:13px;color:#333333;letter-spacing:0.090px;text-decoration:underline;text-underline-offset:1px;text-decoration-thickness:1px;">Política de Cookies</div>
<div class="t" style="left:1125.00px;top:801px;line-height:15px;font-size:13px;color:#333333;letter-spacing:0.250px;text-decoration:underline;text-underline-offset:1px;text-decoration-thickness:1px;">Soporte</div>
<div class="t" style="left:22.90px;top:86px;line-height:14px;font-size:12px;color:#2b2f3a;letter-spacing:0.607px;">Favoritos</div>
<div class="t" style="left:33.60px;top:144px;line-height:14px;font-size:12px;color:#2b2f3a;letter-spacing:0.692px;">Inicio</div>
<div class="t" style="left:27.90px;top:202px;line-height:14px;font-size:12px;color:#2b2f3a;letter-spacing:0.407px;">Análisis</div>
<div class="t" style="left:30.60px;top:259px;line-height:14px;font-size:12px;color:#2b2f3a;letter-spacing:0.422px;">Planes</div>
<div class="t" style="left:27.45px;top:316px;line-height:14px;font-size:12px;color:#2b2f3a;letter-spacing:0.736px;">Gestión</div>
<div class="t" style="left:18.40px;top:374px;line-height:14px;font-size:12px;color:#2b2f3a;letter-spacing:0.815px;">ScoreCard</div>
<div class="t" style="left:20.90px;top:489px;line-height:14px;font-size:12px;color:#2b2f3a;letter-spacing:0.606px;">Proyectos</div>
<div class="t" style="left:23.20px;top:546px;line-height:14px;font-size:12px;color:#2b2f3a;letter-spacing:0.656px;">Auditoría</div>
<div class="t" style="left:20.90px;top:604px;line-height:14px;font-size:12px;color:#2b2f3a;letter-spacing:0.251px;">Análisis BI</div>
<div class="t" style="left:28.80px;top:708px;line-height:14px;font-size:12px;color:#2b2f3a;letter-spacing:0.508px;">Ajustes</div>
<div class="t" style="left:31.00px;top:766px;line-height:14px;font-size:12px;color:#2b2f3a;letter-spacing:0.966px;">Ayuda</div>
<div class="t" style="left:19.75px;top:431px;line-height:14px;font-size:12px;color:#ffffff;font-weight:700;letter-spacing:0.151px;">Secciones</div>
<div class="t" style="left:1403.5px;top:670px;width:114px;height:16px;font-size:16px;color:#fff;transform:rotate(-90deg);transform-origin:57px 8px;letter-spacing:0px;">Danos feedback</div>
</body></html>
